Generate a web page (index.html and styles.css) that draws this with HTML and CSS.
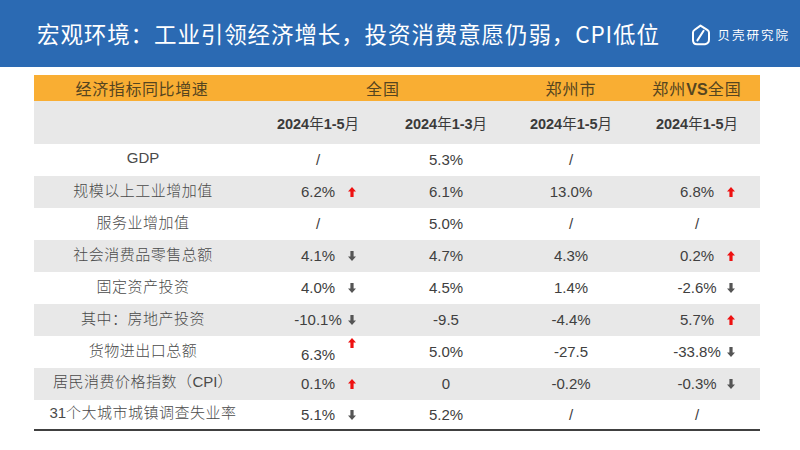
FILE: index.html
```html
<!DOCTYPE html>
<html lang="zh-CN">
<head>
<meta charset="utf-8">
<title>宏观环境</title>
<link rel="stylesheet" href="styles.css">
</head>
<body>
<header class="banner">
  <h1 class="title">宏观环境：工业引领经济增长，投资消费意愿仍弱，CPI低位</h1>
  <div class="logo">
    <svg class="logo-icon" width="20" height="22" viewBox="0 0 20 22">
      <path d="M9.5 1.6 L16.6 6.2 Q18 7.1 18 8.8 L18 15.5 Q18 19.5 14 20.2 L6 20.2 Q2 20.2 2 16.2 L2 8.6 Q2 6.9 3.4 6 Z" fill="none" stroke="#fff" stroke-width="2" stroke-linejoin="round"/>
      <path d="M12.6 6.8 L6.4 16.4" stroke="#fff" stroke-width="2" stroke-linecap="round"/>
    </svg>
    <span class="logo-text">贝壳研究院</span>
  </div>
</header>

<main class="sheet">
  <div class="row head">
    <div class="hcell">经济指标同比增速</div>
    <div class="hcell span2">全国</div>
    <div class="hcell">郑州市</div>
    <div class="hcell">郑州<b>VS</b>全国</div>
  </div>
  <div class="row sub">
    <div></div>
    <div class="period"><b>2024</b>年<b>1-5</b>月</div>
    <div class="period"><b>2024</b>年<b>1-3</b>月</div>
    <div class="period"><b>2024</b>年<b>1-5</b>月</div>
    <div class="period"><b>2024</b>年<b>1-5</b>月</div>
  </div>

  <div class="row data">
    <div class="label lat">GDP</div>
    <div class="val"><span class="num">/</span></div>
    <div class="val"><span class="num">5.3%</span></div>
    <div class="val"><span class="num">/</span></div>
    <div class="val"><span class="num"></span></div>
  </div>
  <div class="row data alt">
    <div class="label">规模以上工业增加值</div>
    <div class="val"><span class="num">6.2%</span><svg class="arr up" viewBox="0 0 8 10"><polygon points="4,0 8,4.5 5.6,4.5 5.6,10 2.4,10 2.4,4.5 0,4.5"/></svg></div>
    <div class="val"><span class="num">6.1%</span></div>
    <div class="val"><span class="num">13.0%</span></div>
    <div class="val"><span class="num">6.8%</span><svg class="arr up" viewBox="0 0 8 10"><polygon points="4,0 8,4.5 5.6,4.5 5.6,10 2.4,10 2.4,4.5 0,4.5"/></svg></div>
  </div>
  <div class="row data">
    <div class="label">服务业增加值</div>
    <div class="val"><span class="num">/</span></div>
    <div class="val"><span class="num">5.0%</span></div>
    <div class="val"><span class="num">/</span></div>
    <div class="val"><span class="num">/</span></div>
  </div>
  <div class="row data alt">
    <div class="label">社会消费品零售总额</div>
    <div class="val"><span class="num">4.1%</span><svg class="arr down" viewBox="0 0 8 10"><polygon points="2.4,0 5.6,0 5.6,5.5 8,5.5 4,10 0,5.5 2.4,5.5"/></svg></div>
    <div class="val"><span class="num">4.7%</span></div>
    <div class="val"><span class="num">4.3%</span></div>
    <div class="val"><span class="num">0.2%</span><svg class="arr up" viewBox="0 0 8 10"><polygon points="4,0 8,4.5 5.6,4.5 5.6,10 2.4,10 2.4,4.5 0,4.5"/></svg></div>
  </div>
  <div class="row data">
    <div class="label">固定资产投资</div>
    <div class="val"><span class="num">4.0%</span><svg class="arr down" viewBox="0 0 8 10"><polygon points="2.4,0 5.6,0 5.6,5.5 8,5.5 4,10 0,5.5 2.4,5.5"/></svg></div>
    <div class="val"><span class="num">4.5%</span></div>
    <div class="val"><span class="num">1.4%</span></div>
    <div class="val"><span class="num">-2.6%</span><svg class="arr down" viewBox="0 0 8 10"><polygon points="2.4,0 5.6,0 5.6,5.5 8,5.5 4,10 0,5.5 2.4,5.5"/></svg></div>
  </div>
  <div class="row data alt">
    <div class="label">其中：房地产投资</div>
    <div class="val"><span class="num">-10.1%</span><svg class="arr down" viewBox="0 0 8 10"><polygon points="2.4,0 5.6,0 5.6,5.5 8,5.5 4,10 0,5.5 2.4,5.5"/></svg></div>
    <div class="val"><span class="num">-9.5</span></div>
    <div class="val"><span class="num">-4.4%</span></div>
    <div class="val"><span class="num">5.7%</span><svg class="arr up" viewBox="0 0 8 10"><polygon points="4,0 8,4.5 5.6,4.5 5.6,10 2.4,10 2.4,4.5 0,4.5"/></svg></div>
  </div>
  <div class="row data">
    <div class="label">货物进出口总额</div>
    <div class="val low"><span class="num">6.3%</span><svg class="arr up raised" viewBox="0 0 8 10"><polygon points="4,0 8,4.5 5.6,4.5 5.6,10 2.4,10 2.4,4.5 0,4.5"/></svg></div>
    <div class="val"><span class="num">5.0%</span></div>
    <div class="val"><span class="num">-27.5</span></div>
    <div class="val"><span class="num">-33.8%</span><svg class="arr down" viewBox="0 0 8 10"><polygon points="2.4,0 5.6,0 5.6,5.5 8,5.5 4,10 0,5.5 2.4,5.5"/></svg></div>
  </div>
  <div class="row data alt">
    <div class="label">居民消费价格指数（<span class="lat">CPI</span>）</div>
    <div class="val"><span class="num">0.1%</span><svg class="arr up" viewBox="0 0 8 10"><polygon points="4,0 8,4.5 5.6,4.5 5.6,10 2.4,10 2.4,4.5 0,4.5"/></svg></div>
    <div class="val"><span class="num">0</span></div>
    <div class="val"><span class="num">-0.2%</span></div>
    <div class="val"><span class="num">-0.3%</span><svg class="arr down" viewBox="0 0 8 10"><polygon points="2.4,0 5.6,0 5.6,5.5 8,5.5 4,10 0,5.5 2.4,5.5"/></svg></div>
  </div>
  <div class="row data last">
    <div class="label"><span class="lat">31</span>个大城市城镇调查失业率</div>
    <div class="val"><span class="num">5.1%</span><svg class="arr down" viewBox="0 0 8 10"><polygon points="2.4,0 5.6,0 5.6,5.5 8,5.5 4,10 0,5.5 2.4,5.5"/></svg></div>
    <div class="val"><span class="num">5.2%</span></div>
    <div class="val"><span class="num">/</span></div>
    <div class="val"><span class="num">/</span></div>
  </div>
</main>
</body>
</html>
```

FILE: styles.css
```css
* { box-sizing: border-box; }
html, body { margin: 0; padding: 0; }
body {
  width: 800px;
  height: 450px;
  background: #ffffff;
  font-family: "Liberation Sans", "Noto Sans CJK SC", sans-serif;
  color: #404040;
  overflow: hidden;
}

.banner {
  height: 67px;
  background: #2b6ab3;
  display: flex;
  align-items: center;
  justify-content: space-between;
  padding: 0 10px 0 37px;
}
.title {
  margin: 0;
  font-family: "Noto Sans CJK SC", sans-serif;
  font-weight: 400;
  font-size: 22.5px;
  color: #ffffff;
  letter-spacing: 0.9px;
  line-height: 1;
}
.logo {
  display: flex;
  align-items: center;
  gap: 6px;
  margin-top: 2px;
}
.logo-icon { display: block; }
.logo-text {
  font-family: "Noto Sans CJK SC", sans-serif;
  font-size: 12.5px;
  color: #ffffff;
  letter-spacing: 2px;
}

.sheet {
  margin: 8px 0 0 34px;
  width: 726px;
}
.row {
  display: grid;
  grid-template-columns: 218px 132px 124px 126px 126px;
}
.head {
  height: 26px;
  background: #f9ae33;
  align-items: center;
  font-family: "Noto Sans CJK SC", sans-serif;
  font-size: 16px;
  color: #554520;
}
.hcell { text-align: center; letter-spacing: 1px; }
.hcell:first-child { letter-spacing: 0.6px; padding-right: 2px; }
.hcell b { font-family: "Liberation Sans", sans-serif; font-weight: 700; letter-spacing: 0; }
.span2 { grid-column: span 2; padding-left: 6px; }

.sub {
  height: 43px;
  background: #e8e8e8;
  align-items: center;
  font-family: "Noto Sans CJK SC", sans-serif;
  font-size: 14.5px;
  color: #3a3a3a;
}
.period { text-align: center; }
.period b { font-family: "Liberation Sans", sans-serif; font-weight: 700; }

.data {
  height: 32px;
  align-items: center;
  font-size: 15px;
}
.alt { background: #e8e8e8; }
.last { height: 31px; border-bottom: 2px solid #404040; }

.label {
  text-align: center;
  font-family: "Noto Sans CJK SC", sans-serif;
  font-size: 15px;
  font-weight: 300;
  color: #4a4a4a;
  letter-spacing: 0.5px;
  padding-bottom: 5px;
  line-height: 20px;
}
.label.lat, .label .lat { font-family: "Liberation Sans", sans-serif; font-weight: 400; letter-spacing: 0; }

.val {
  display: grid;
  grid-template-columns: 1fr 54px 1fr;
  align-items: center;
  line-height: 20px;
}
.val .num {
  grid-column: 2;
  text-align: center;
  white-space: nowrap;
}
.val.low { padding-top: 6px; }
.arr {
  grid-column: 3;
  width: 8px;
  height: 10px;
  margin-left: 3px;
  justify-self: start;
}
.arr.up { fill: #ee1111; }
.arr.down { fill: #555555; }
.arr.raised { align-self: start; margin-top: -7px; }
```
